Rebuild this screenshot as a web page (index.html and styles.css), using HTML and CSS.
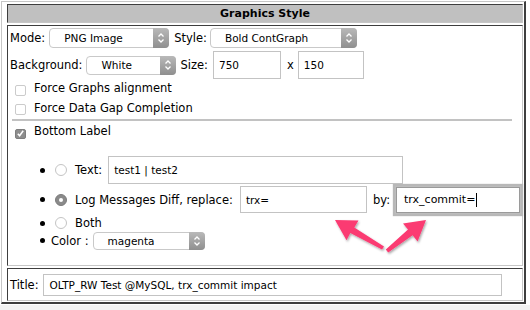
FILE: index.html
```html
<!DOCTYPE html>
<html>
<head>
<meta charset="utf-8">
<link rel="stylesheet" href="styles.css">
</head>
<body>
<div class="frame">
  <div class="cell head">Graphics Style</div>
  <div class="cell main">
    <div class="row r1">
      <span class="lbl">Mode:</span>
      <div class="select s-mode"><span class="val">PNG Image</span><span class="btn"><svg width="8" height="12" viewBox="0 0 8 12"><path d="M1.5 4.5 L4 2 L6.5 4.5 M1.5 7.5 L4 10 L6.5 7.5" fill="none" stroke="#fff" stroke-width="1.3"/></svg></span></div>
      <span class="lbl l-style">Style:</span>
      <div class="select s-style"><span class="val">Bold ContGraph</span><span class="btn"><svg width="8" height="12" viewBox="0 0 8 12"><path d="M1.5 4.5 L4 2 L6.5 4.5 M1.5 7.5 L4 10 L6.5 7.5" fill="none" stroke="#fff" stroke-width="1.3"/></svg></span></div>
    </div>
    <div class="row r2">
      <span class="lbl">Background:</span>
      <div class="select s-bg"><span class="val">White</span><span class="btn"><svg width="8" height="12" viewBox="0 0 8 12"><path d="M1.5 4.5 L4 2 L6.5 4.5 M1.5 7.5 L4 10 L6.5 7.5" fill="none" stroke="#fff" stroke-width="1.3"/></svg></span></div>
      <span class="lbl l-size">Size:</span>
      <div class="field f-w">750</div>
      <span class="lbl l-x">x</span>
      <div class="field f-h">150</div>
    </div>
    <div class="check c1"><span class="box"></span><span>Force Graphs alignment</span></div>
    <div class="check c2"><span class="box"></span><span>Force Data Gap Completion</span></div>
    <div class="sep"></div>
    <div class="check c3"><span class="box on"><svg width="9" height="9" viewBox="0 0 9 9"><path d="M1.8 4.8 L3.6 6.8 L7.2 1.8" fill="none" stroke="#fff" stroke-width="1.5"/></svg></span><span>Bottom Label</span></div>
    <ul class="opts">
      <li class="o o1"><span class="radio"></span><span class="lbl">Text:</span><div class="field f-text">test1 | test2</div></li>
      <li class="o o2"><span class="radio on"></span><span class="lbl">Log Messages Diff, replace:</span><div class="field f-rep">trx=</div><span class="lbl l-by">by:</span><div class="field f-by focus">trx_commit=<span class="caret"></span></div></li>
      <li class="o o3"><span class="radio"></span><span class="lbl">Both</span></li>
      <li class="o o4"><span class="lbl">Color :</span><div class="select s-color"><span class="val">magenta</span><span class="btn"><svg width="8" height="12" viewBox="0 0 8 12"><path d="M1.5 4.5 L4 2 L6.5 4.5 M1.5 7.5 L4 10 L6.5 7.5" fill="none" stroke="#fff" stroke-width="1.3"/></svg></span></div></li>
    </ul>
  </div>
  <div class="cell title">
    <span class="lbl">Title:</span>
    <div class="field f-title">OLTP_RW Test @MySQL, trx_commit impact</div>
  </div>
</div>
<svg class="arrows" width="530" height="310" viewBox="0 0 530 310">
  <defs>
    <filter id="sh" x="-20%" y="-20%" width="140%" height="140%">
      <feDropShadow dx="1" dy="1.5" stdDeviation="1.2" flood-color="#000" flood-opacity="0.35"/>
    </filter>
  </defs>
  <polygon filter="url(#sh)" fill="#fb3a72" points="335,220 358.5,220.4 354.3,227.4 384,246.4 382,249.6 350.3,233 346.5,240.2"/>
  <polygon filter="url(#sh)" fill="#fb3a72" points="426,220 417.6,241.4 412.6,235.2 388.2,252.6 385.8,249.4 408,229.6 403,223.4"/>
</svg>
</body>
</html>
```

FILE: styles.css
```css
html, body {
  margin: 0;
  padding: 0;
}
html {
  background: #fff;
}
body {
  position: relative;
  width: 530px;
  height: 310px;
  overflow: hidden;
  font-family: "DejaVu Sans", sans-serif;
  font-size: 11.5px;
  color: #000;
  background: linear-gradient(#fff 0, #fff 305px, #f3f3f3 305px);
}
.frame {
  margin: 1px 0 0 1px;
  width: 525px;
  box-sizing: border-box;
  background: #fff;
  border-top: 1px solid #c6c6c6;
  border-left: 1px solid #c6c6c6;
  border-right: 2px solid #3e3e3e;
  border-bottom: 2px solid #3e3e3e;
  padding: 2px 1px 1px 5px;
  display: flex;
  flex-direction: column;
  gap: 2px;
}
.cell {
  box-sizing: border-box;
  border-top: 1px solid #3e3e3e;
  border-left: 1px solid #3e3e3e;
  border-right: 1px solid #c6c6c6;
  border-bottom: 1px solid #c6c6c6;
}
.head {
  height: 19px;
  background: #c0c0c0;
  text-align: center;
  font-weight: bold;
  font-size: 11px;
  line-height: 17px;
}
.main {
  height: 241px;
  padding: 1px 2px 0 2px;
}
.row {
  display: flex;
  align-items: center;
}
.r1 { height: 20px; margin-top: 1px; }
.r2 { height: 28px; margin-top: 3px; }
.lbl { white-space: nowrap; }

.select {
  box-sizing: border-box;
  height: 20px;
  border: 1px solid #c9c9c9;
  border-radius: 4px;
  background: #fff;
  display: flex;
  align-items: stretch;
  font-size: 10.5px;
}
.select .val {
  flex: 1;
  padding-left: 14px;
  line-height: 18px;
}
.select .btn {
  width: 16px;
  margin: -1px -1px -1px 0;
  border-radius: 0 4px 4px 0;
  background: linear-gradient(#b9b9b9, #8f8f8f);
  display: flex;
  align-items: center;
  justify-content: center;
}
.s-mode { width: 120px; margin-left: 4px; }
.l-style { margin-left: 5px; }
.s-style { width: 147px; margin-left: 3px; }
.s-bg { width: 90px; height: 19px; margin-left: 4px; }
.s-bg .val { line-height: 17px; }
.l-size { margin-left: 4px; }

.field {
  box-sizing: border-box;
  height: 28px;
  border: 1px solid #c3c3c3;
  background: #fff;
  font-size: 10.5px;
  line-height: 26px;
  padding-left: 5px;
  white-space: nowrap;
  display: flex;
  align-items: center;
}
.f-w { width: 68px; margin-left: 5px; }
.l-x { margin-left: 6px; }
.f-h { width: 66px; margin-left: 4px; }

.check {
  display: flex;
  align-items: center;
}
.c1 { height: 18px; }
.c2 { height: 19px; margin-top: 1px; }
.c3 { height: 18px; margin-top: 1px; }
.box {
  box-sizing: border-box;
  width: 11px;
  height: 11px;
  margin: 4px 8px 0 5px;
  border: 1px solid #cbcbcb;
  border-radius: 2px;
  background: #fff;
  display: flex;
  align-items: center;
  justify-content: center;
}
.box.on {
  width: 11px;
  height: 10px;
  margin-top: 5px;
  background: #8d8d8d;
  border-color: #7e7e7e;
}
.sep {
  height: 2px;
  margin: 2px 8px 0 2px;
  background: #c2c2c2;
}

.opts {
  list-style: none;
  margin: 16px 0 0 0;
  padding: 0;
}
.o {
  display: flex;
  align-items: center;
  padding-left: 30px;
}
.o::before {
  content: "";
  width: 5px;
  height: 5px;
  border-radius: 50%;
  background: #000;
  flex: none;
}
.o1 { height: 28px; }
.o2 { height: 31px; }
.o3 { height: 16px; }
.o4 { height: 19px; }
.radio {
  box-sizing: border-box;
  width: 12px;
  height: 12px;
  margin-left: 10px;
  margin-right: 8px;
  border: 1px solid #c4c4c4;
  border-radius: 50%;
  background: #fff;
  display: flex;
  align-items: center;
  justify-content: center;
}
.radio.on {
  background: #8a8a8a;
  border-color: #7c7c7c;
}
.radio.on::after {
  content: "";
  width: 4px;
  height: 4px;
  border-radius: 50%;
  background: #fff;
}
.f-text { width: 295px; margin-left: 6px; }
.f-rep { width: 127px; height: 27px; margin-left: 7px; }
.l-by { margin-left: 6px; }
.f-by {
  width: 124px;
  height: 26px;
  margin-left: 6px;
  border-color: #9a9a9a;
  box-shadow: 0 0 0 1px #bdbdbd, 0 0 1px 3px #b8b8b8;
  padding-left: 7px;
  font-size: 11px;
}
.caret {
  display: inline-block;
  width: 1px;
  height: 14px;
  background: #000;
  margin-left: 1px;
}
.o4 .lbl { margin-left: 6px; }
.s-color { width: 112px; height: 18px; margin-left: 4px; }
.s-color .val { line-height: 16px; }

.title {
  height: 33px;
  display: flex;
  align-items: center;
  padding-left: 2px;
}
.f-title {
  width: 459px;
  height: 22px;
  margin-left: 4px;
  padding-left: 6px;
  line-height: 20px;
}

.arrows {
  position: absolute;
  left: 0;
  top: 0;
  pointer-events: none;
}
```
